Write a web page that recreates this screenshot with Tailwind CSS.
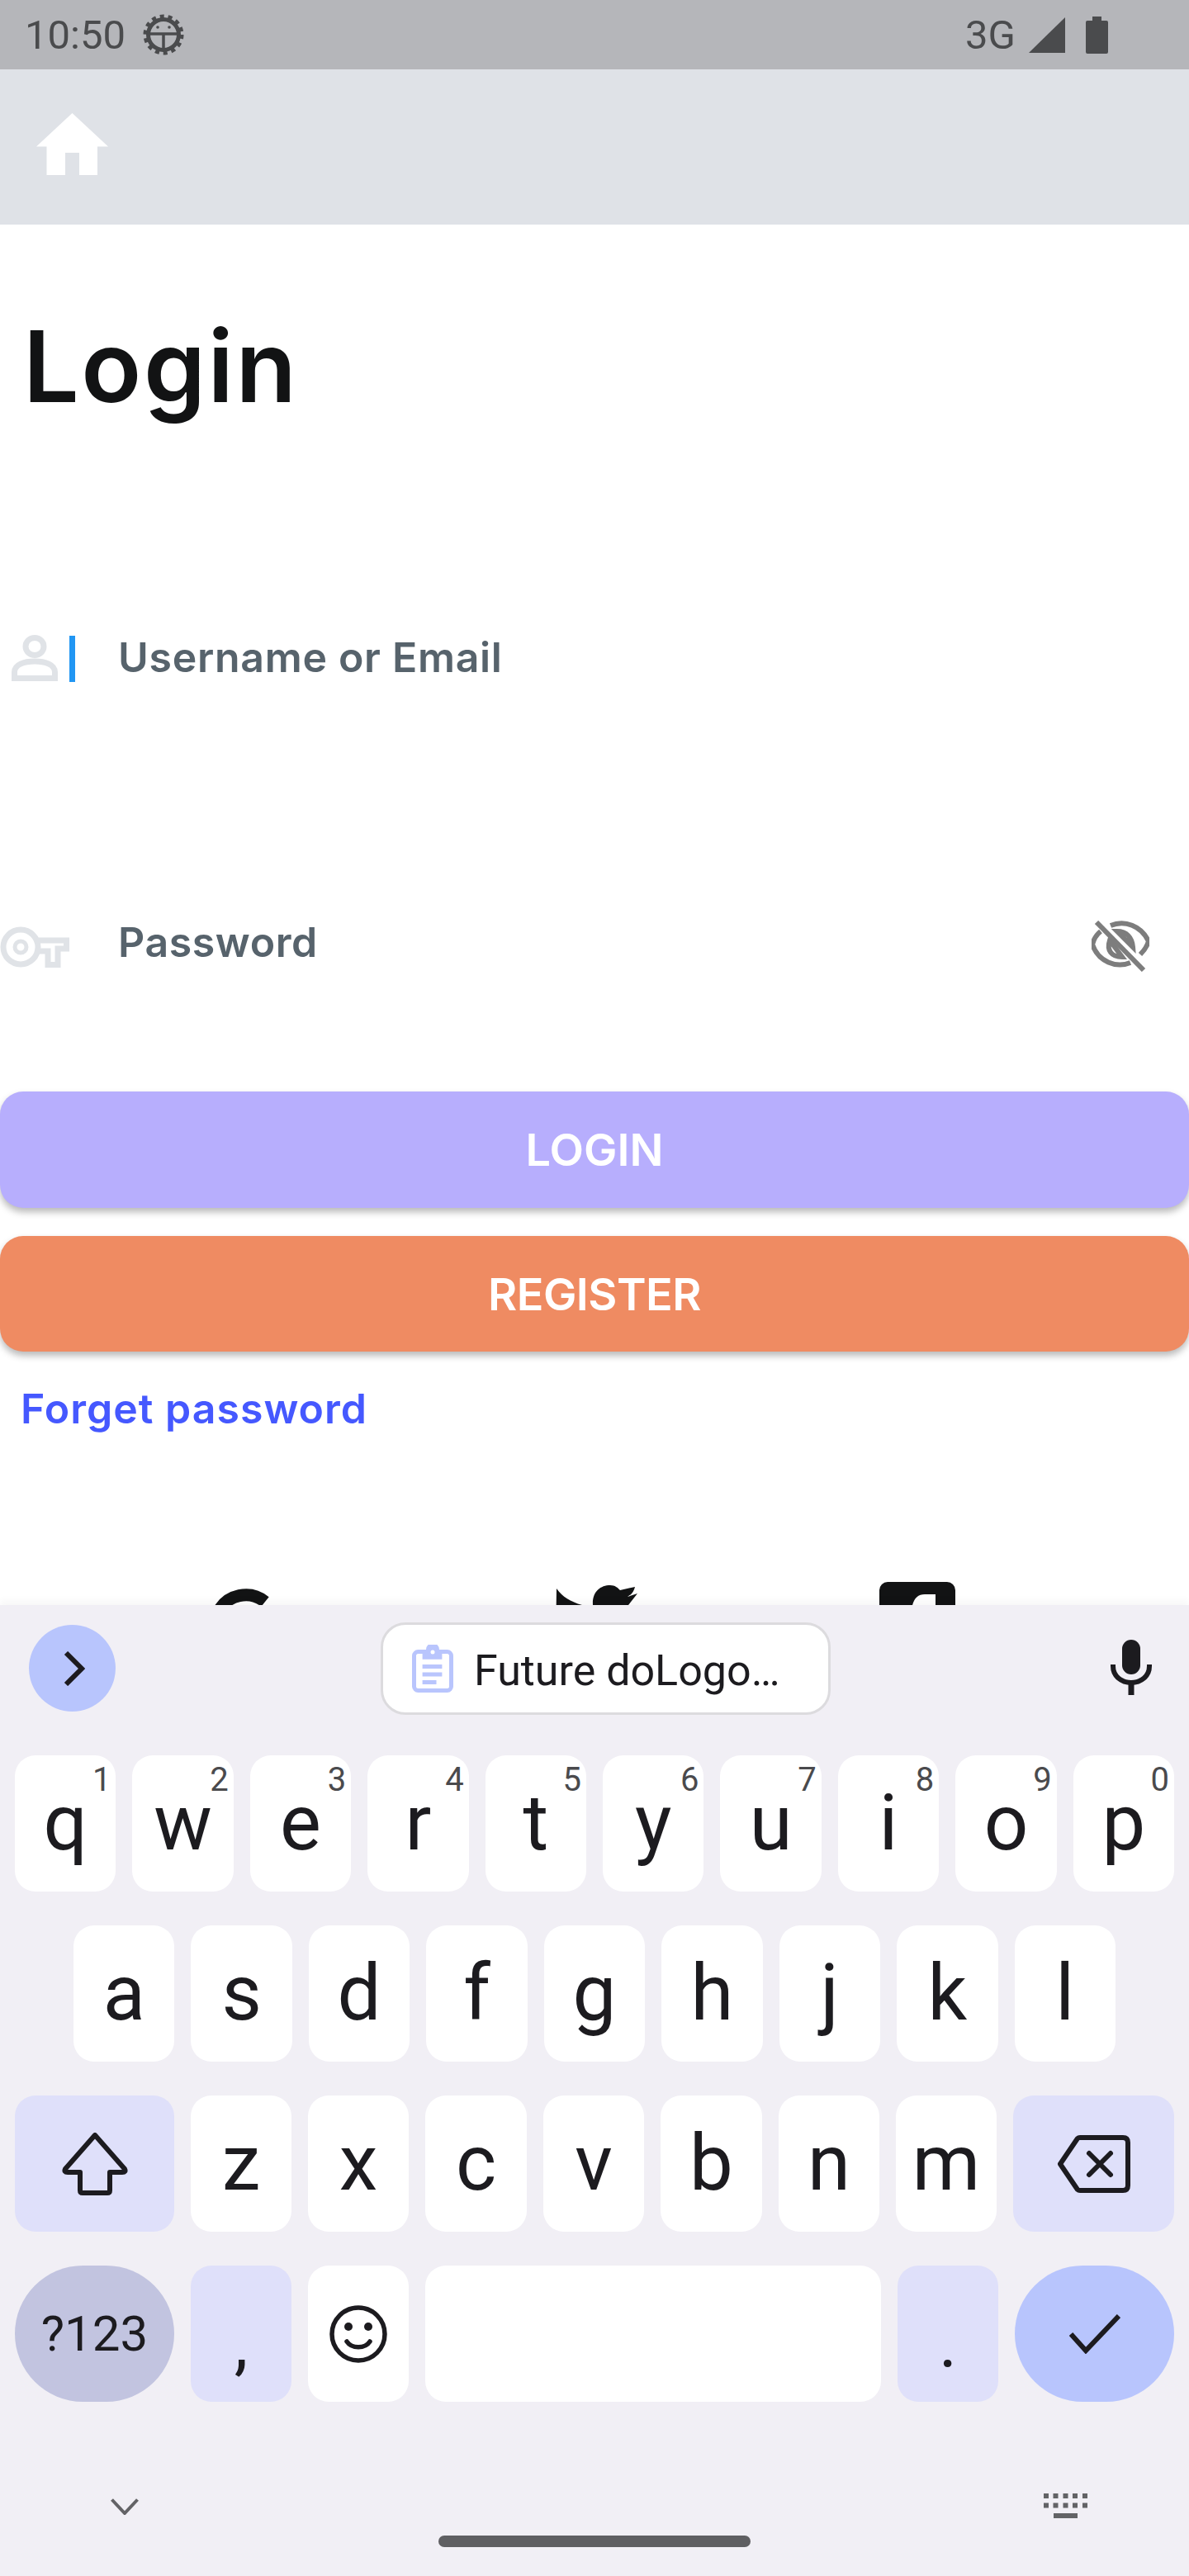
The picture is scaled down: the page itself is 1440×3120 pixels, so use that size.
<!doctype html>
<html><head><meta charset="utf-8"><script src="https://cdn.jsdelivr.net/npm/@tailwindcss/browser@4"></script></head>
<body class="bg-white">
<div class="w-[1440px] h-[3120px] flex flex-col overflow-hidden bg-white font-['Roboto',sans-serif]">
  <!-- status bar -->
  <div class="h-[84px] shrink-0 bg-[#b5b6ba] flex items-center text-[#4a4b4d] pl-[30px] pr-[98px]">
    <span class="text-[49px] font-normal leading-none">10:50</span>
    <svg class="ml-[21px] w-[50px] h-[50px]" viewBox="0 0 50 50" fill="none" stroke="#4a4b4d">
      <circle cx="25" cy="25" r="18.500" stroke-width="5"/>
      <circle cx="25" cy="25" r="22" stroke-width="5" stroke-dasharray="5 4.870"/>
      <path d="M7 24H43M25 24V42" stroke-width="3.500"/>
      <circle cx="18" cy="16" r="1.800" fill="#4a4b4d" stroke="none"/><circle cx="32" cy="16" r="1.800" fill="#4a4b4d" stroke="none"/>
    </svg>
    <span class="ml-auto text-[49px] leading-none">3G</span>
    <svg class="ml-[16px] w-[44px] h-[43px]" viewBox="0 0 44 43" fill="#4a4b4d"><path d="M44 0V43H0Z"/></svg>
    <svg class="ml-[25px] w-[27px] h-[45px]" viewBox="0 0 27 45" fill="#4a4b4d"><path d="M8 0H19V5H25Q27 5 27 7V43Q27 45 25 45H2Q0 45 0 43V7Q0 5 2 5H8Z"/></svg>
  </div>
  <!-- app bar -->
  <div class="h-[188px] shrink-0 bg-[#dfe2e7] flex items-center pl-[44px]">
    <svg class="w-[87px] h-[75px] mb-[8px]" viewBox="0 0 87 75" fill="#fff"><path d="M43.500 0L87 40.500H74V75H52V48H35V75H12.500V40.500H0Z"/></svg>
  </div>
  <!-- content -->
  <div class="relative flex-1 overflow-hidden font-['Inter',sans-serif]">
    <h1 class="pl-[28px] pt-[102px] text-[120px] leading-[140px] font-semibold text-[#121314] tracking-[2.500px] h-[380px]">Login</h1>
    <div class="flex items-start h-[344px]">
      <svg class="ml-[14px] mt-[117px] w-[56px] h-[56px]" viewBox="0 0 56 56" fill="none" stroke="#e0e3e7" stroke-width="7"><ellipse cx="28" cy="14" rx="11" ry="10.500"/><path d="M3.500 52.500V45C3.500 36 15 32 28 32S52.500 36 52.500 45V52.500Z"/></svg>
      <div class="ml-[14px] mt-[118px] w-[7px] h-[56px] bg-[#2196f3]"></div>
      <span class="ml-[52px] mt-[114px] text-[50px] leading-[60px] font-semibold text-[#57636c] tracking-[0.700px]">Username or Email</span>
    </div>
    <div class="flex items-start h-[362px]">
      <svg class="mt-[126px] w-[84px] h-[50px]" viewBox="0 0 84 50" fill="none" stroke="#e0e3e7" stroke-width="7"><circle cx="25" cy="25" r="21"/><circle cx="25" cy="25" r="7" stroke-width="5"/><path d="M44 17H80.500V27H70V46.500H58V30H44"/></svg>
      <span class="ml-[59px] mt-[115px] text-[50px] leading-[60px] font-semibold text-[#57636c] tracking-[0.600px]">Password</span>
      <svg class="ml-auto mr-[48px] mt-[119px] w-[70px] h-[62px]" viewBox="0 0 70 62" fill="none" stroke="#7d7d7d" stroke-width="6"><path d="M6 2L63 60"/><path d="M23 6C40 -1 60 6 69 25C67 32 64 36 59 41"/><path d="M11 13C6 17 3 21 1 29C8 50 30 58 47 51"/><path d="M31 13C42 13 49 20 50 32L31 13Z"/><path d="M22 24C18 36 24 44 37 44L22 24Z"/></svg>
    </div>
    <div class="mt-[-36px] flex flex-col gap-[34px]">
      <button class="h-[141px] w-full rounded-[28px] bg-[#b7aefd] text-white text-[54px] font-semibold shadow-[0_5px_8px_rgba(0,0,0,0.28)]">LOGIN</button>
      <button class="h-[140px] w-full rounded-[28px] bg-[#ef8b62] text-white text-[54px] font-semibold shadow-[0_5px_8px_rgba(0,0,0,0.28)] tracking-[-0.500px]">REGISTER</button>
    </div>
    <div class="pl-[25px] mt-[39px] text-[50px] leading-[60px] font-semibold text-[#4558ff] tracking-[1px]">Forget password</div>
    <!-- social icons, clipped by the keyboard -->
    <div class="absolute left-0 top-[1645px] w-full h-[100px]">
      <svg class="absolute left-[253px] top-[6px] w-[90px] h-[90px]" viewBox="0 0 90 90" fill="none" stroke="#121314" stroke-width="15"><path d="M68 17A37.500 37.500 0 1 0 82 50H45"/></svg>
      <svg class="absolute left-[673px] top-[3px] w-[100px] h-[90px] overflow-visible" viewBox="0 0 100 90" fill="#121314"><path d="M1 4C8 14 18 20 32 24H45C44 8 54 0 66 0C72 0 75 3 78 6L96 2C94 10 90 12 87 14L99 10L88 24C88 55 66 84 34 84C20 84 10 80 0 74Z"/></svg>
      <svg class="absolute left-[1065px] top-[-1px] w-[92px] h-[92px]" viewBox="0 0 92 92"><rect width="92" height="92" rx="10" fill="#121314"/><path d="M39 34Q41 15 55 15H68V92H39Z" fill="#fff"/></svg>
    </div>
  </div>
  <!-- keyboard -->
  <div class="relative h-[1176px] shrink-0 bg-[#f1eff5] shadow-[0_-6px_8px_rgba(0,0,0,0.03)] font-['Roboto',sans-serif] text-[#1c1b1f]">
    <div class="h-[182px] flex items-start pt-[21px] pl-[35px] pr-[45px]">
      <div class="mt-[3px] w-[105px] h-[105px] rounded-full bg-[#b8c5fd] flex items-center justify-center">
        <svg class="ml-[4px] w-[26px] h-[42px]" viewBox="0 0 26 42" fill="none" stroke="#1c1b1f" stroke-width="6"><path d="M3 2L22 21L3 40"/></svg>
      </div>
      <div class="ml-[321px] w-[545px] h-[112px] rounded-[30px] border-[3px] border-[#dcdbde] bg-white flex items-center pl-[35px]">
        <svg class="w-[50px] h-[58px] shrink-0" viewBox="0 0 50 58" fill="none"><rect x="2.500" y="8.500" width="45" height="47" rx="5" stroke="#b9c5fd" stroke-width="5"/><path d="M12.600 6H17A8 8 0 0 1 33 6H36.400V17.700H12.600Z" fill="#b9c5fd"/><circle cx="25" cy="9" r="2.500" fill="#fff"/><path d="M12.600 24H36.400V29H12.600ZM12.600 33.500H36.400V38.500H12.600ZM12.600 43H29.500V48H12.600Z" fill="#b9c5fd"/></svg>
        <span class="ml-[25px] text-[52px] leading-none mt-[6px]">Future doLogo…</span>
      </div>
      <svg class="ml-auto mt-[21px] w-[50px] h-[67px]" viewBox="0 0 50 67" fill="#1c1b1f"><rect x="14" y="0" width="22" height="42" rx="11"/><path d="M3 30V32C3 44 13 52 25 52S47 44 47 32V30" fill="none" stroke="#1c1b1f" stroke-width="6"/><rect x="21.500" y="50" width="7" height="17"/></svg>
    </div>
    <div class="flex flex-col gap-[41px]">
      <div class="flex gap-[20px] px-[18px] h-[165px]">
        <div class="relative flex-1 rounded-[25px] bg-white flex justify-center text-[94px] leading-[165px]">q<span class="absolute right-[6px] top-[6px] text-[40px] leading-[48px] text-[#4a4a4d]">1</span></div>
        <div class="relative flex-1 rounded-[25px] bg-white flex justify-center text-[94px] leading-[165px]">w<span class="absolute right-[6px] top-[6px] text-[40px] leading-[48px] text-[#4a4a4d]">2</span></div>
        <div class="relative flex-1 rounded-[25px] bg-white flex justify-center text-[94px] leading-[165px]">e<span class="absolute right-[6px] top-[6px] text-[40px] leading-[48px] text-[#4a4a4d]">3</span></div>
        <div class="relative flex-1 rounded-[25px] bg-white flex justify-center text-[94px] leading-[165px]">r<span class="absolute right-[6px] top-[6px] text-[40px] leading-[48px] text-[#4a4a4d]">4</span></div>
        <div class="relative flex-1 rounded-[25px] bg-white flex justify-center text-[94px] leading-[165px]">t<span class="absolute right-[6px] top-[6px] text-[40px] leading-[48px] text-[#4a4a4d]">5</span></div>
        <div class="relative flex-1 rounded-[25px] bg-white flex justify-center text-[94px] leading-[165px]">y<span class="absolute right-[6px] top-[6px] text-[40px] leading-[48px] text-[#4a4a4d]">6</span></div>
        <div class="relative flex-1 rounded-[25px] bg-white flex justify-center text-[94px] leading-[165px]">u<span class="absolute right-[6px] top-[6px] text-[40px] leading-[48px] text-[#4a4a4d]">7</span></div>
        <div class="relative flex-1 rounded-[25px] bg-white flex justify-center text-[94px] leading-[165px]">i<span class="absolute right-[6px] top-[6px] text-[40px] leading-[48px] text-[#4a4a4d]">8</span></div>
        <div class="relative flex-1 rounded-[25px] bg-white flex justify-center text-[94px] leading-[165px]">o<span class="absolute right-[6px] top-[6px] text-[40px] leading-[48px] text-[#4a4a4d]">9</span></div>
        <div class="relative flex-1 rounded-[25px] bg-white flex justify-center text-[94px] leading-[165px]">p<span class="absolute right-[6px] top-[6px] text-[40px] leading-[48px] text-[#4a4a4d]">0</span></div>
      </div>
      <div class="flex gap-[20px] px-[89px] h-[165px]">
        <div class="flex-1 rounded-[25px] bg-white text-center text-[94px] leading-[165px]">a</div>
        <div class="flex-1 rounded-[25px] bg-white text-center text-[94px] leading-[165px]">s</div>
        <div class="flex-1 rounded-[25px] bg-white text-center text-[94px] leading-[165px]">d</div>
        <div class="flex-1 rounded-[25px] bg-white text-center text-[94px] leading-[165px]">f</div>
        <div class="flex-1 rounded-[25px] bg-white text-center text-[94px] leading-[165px]">g</div>
        <div class="flex-1 rounded-[25px] bg-white text-center text-[94px] leading-[165px]">h</div>
        <div class="flex-1 rounded-[25px] bg-white text-center text-[94px] leading-[165px]">j</div>
        <div class="flex-1 rounded-[25px] bg-white text-center text-[94px] leading-[165px]">k</div>
        <div class="flex-1 rounded-[25px] bg-white text-center text-[94px] leading-[165px]">l</div>
      </div>
      <div class="flex gap-[20px] px-[18px] h-[165px]">
        <div class="w-[193px] rounded-[25px] bg-[#dfe0fa] flex items-center justify-center">
          <svg class="w-[80px] h-[76px]" viewBox="0 0 80 76" fill="none" stroke="#1c1b1f" stroke-width="6" stroke-linejoin="round"><path d="M40 3L76 44Q78 48 73 48H58V70Q58 73 55 73H25Q22 73 22 70V48H7Q2 48 4 44Z"/></svg>
        </div>
        <div class="w-[122px] rounded-[25px] bg-white text-center text-[94px] leading-[165px]">z</div>
        <div class="w-[122px] rounded-[25px] bg-white text-center text-[94px] leading-[165px]">x</div>
        <div class="w-[123px] rounded-[25px] bg-white text-center text-[94px] leading-[165px]">c</div>
        <div class="w-[122px] rounded-[25px] bg-white text-center text-[94px] leading-[165px]">v</div>
        <div class="w-[123px] rounded-[25px] bg-white text-center text-[94px] leading-[165px]">b</div>
        <div class="w-[122px] rounded-[25px] bg-white text-center text-[94px] leading-[165px]">n</div>
        <div class="w-[122px] rounded-[25px] bg-white text-center text-[94px] leading-[165px]">m</div>
        <div class="flex-1 rounded-[25px] bg-[#dfe0fa] flex items-center justify-center">
          <svg class="w-[88px] h-[70px]" viewBox="0 0 88 70" fill="none" stroke="#1c1b1f" stroke-width="6" stroke-linejoin="round"><path d="M3 35L24 4Q25 3 27 3H79Q85 3 85 9V61Q85 67 79 67H27Q25 67 24 66Z"/><path d="M38 22L64 48M64 22L38 48" stroke-linecap="round"/></svg>
        </div>
      </div>
      <div class="flex gap-[20px] px-[18px] h-[165px]">
        <div class="w-[193px] rounded-[83px] bg-[#c2c4e0] text-center text-[60px] leading-[165px]">?123</div>
        <div class="w-[122px] rounded-[25px] bg-[#dfe0fa] text-center text-[84px] leading-[190px]">,</div>
        <div class="w-[122px] rounded-[25px] bg-white flex items-center justify-center">
          <svg class="w-[70px] h-[70px]" viewBox="0 0 70 70" fill="none" stroke="#1c1b1f" stroke-width="5.500"><circle cx="35" cy="35" r="32"/><circle cx="23" cy="26" r="5" fill="#1c1b1f" stroke="none"/><circle cx="47" cy="26" r="5" fill="#1c1b1f" stroke="none"/><path d="M21 44C27 53 43 53 49 44" stroke-linecap="round"/></svg>
        </div>
        <div class="w-[552px] rounded-[25px] bg-white"></div>
        <div class="w-[122px] rounded-[25px] bg-[#dfe0fa] text-center text-[84px] leading-[190px]">.</div>
        <div class="flex-1 rounded-[83px] bg-[#b8c5fd] flex items-center justify-center">
          <svg class="w-[62px] h-[48px]" viewBox="0 0 62 48" fill="none" stroke="#1c1b1f" stroke-width="6"><path d="M2 24L20 44L60 2"/></svg>
        </div>
      </div>
    </div>
    <div class="flex items-start justify-between pl-[134px] pr-[123px] mt-[117px]">
      <svg class="w-[34px] h-[20px]" viewBox="0 0 34 20" fill="none" stroke="#636366" stroke-width="4"><path d="M1.500 1.500L17 18L32.500 1.500"/></svg>
      <svg class="w-[53px] h-[30px] -mt-[6px]" viewBox="0 0 53 30" fill="#636366"><path d="M0 0h6v6H0zM11.500 0h6v6h-6zM23.500 0h6v6h-6zM35 0h6v6h-6zM47 0h6v6h-6zM0 11.500h6v6H0zM11.500 11.500h6v6h-6zM23.500 11.500h6v6h-6zM35 11.500h6v6h-6zM47 11.500h6v6h-6zM12 24h29v6H12z"/></svg>
    </div>
    <div class="absolute left-[531px] top-[1127px] w-[378px] h-[14px] rounded-full bg-[#5f5f62]"></div>
  </div>
</div>
</body></html>
